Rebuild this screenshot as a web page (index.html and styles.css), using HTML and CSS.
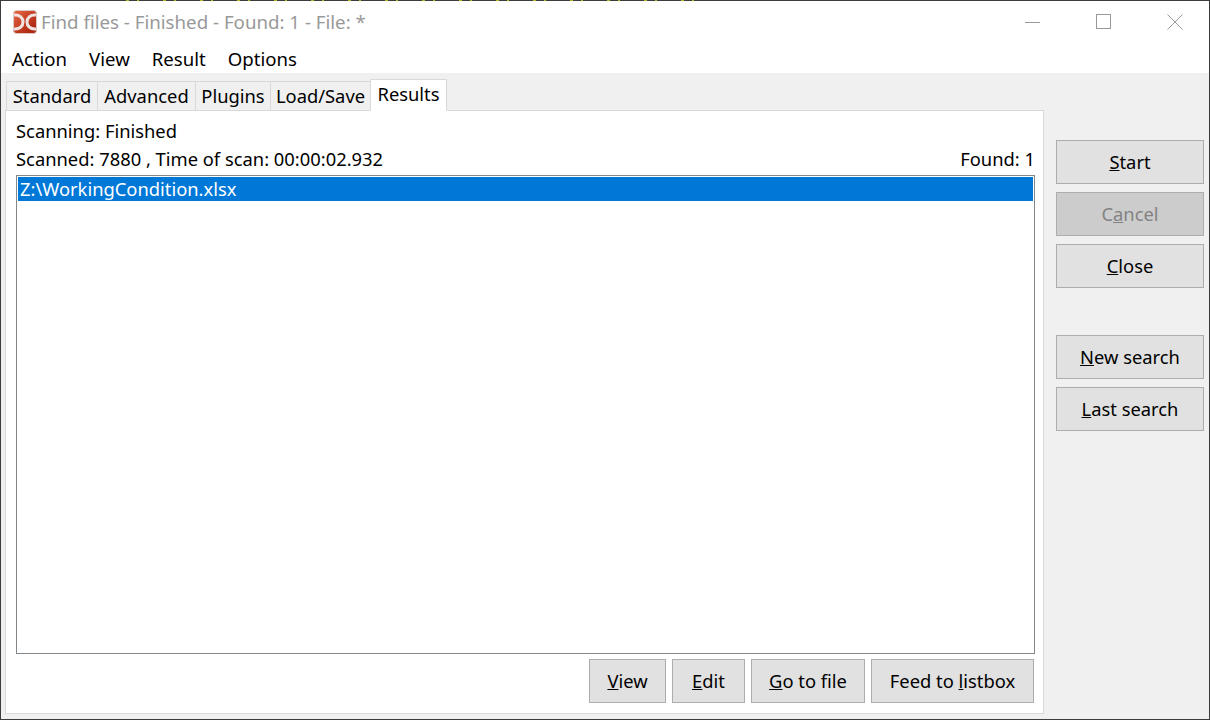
FILE: index.html
```html
<!DOCTYPE html>
<html lang="en">
<head>
<meta charset="utf-8">
<title>Find files</title>
<link rel="stylesheet" href="styles.css">
</head>
<body>
<div class="window">
  <header class="titlebar">
    <svg class="logo" width="24" height="24" viewBox="0 0 24 24">
      <defs><linearGradient id="lg" x1="0" y1="0" x2="1" y2="1"><stop offset="0" stop-color="#ea6a48"/><stop offset="0.55" stop-color="#c23a20"/><stop offset="1" stop-color="#a3200e"/></linearGradient></defs>
      <rect x="0.5" y="0.5" width="23" height="23" rx="3" fill="url(#lg)" stroke="#dcc8c4"/>
      <path d="M1 5 C7 4.5 10 8 10 12 C10 16 7 19.5 1 19" fill="none" stroke="#efe4e1" stroke-width="3"/>
      <path d="M23 5 C17 4.5 14 8 14 12 C14 16 17 19.5 23 19" fill="none" stroke="#efe4e1" stroke-width="3"/>
    </svg>
    <span class="title">Find files - Finished - Found: 1 - File: *</span>
    <div class="caption">
      <svg class="cap" width="16" height="16" viewBox="0 0 16 16"><path d="M0 8.5 H15" stroke="#999" fill="none"/></svg>
      <svg class="cap" width="16" height="16" viewBox="0 0 16 16"><rect x="0.5" y="0.5" width="14" height="14" stroke="#999" fill="none"/></svg>
      <svg class="cap" width="16" height="16" viewBox="0 0 16 16"><path d="M0.5 0.5 L15.5 15.5 M15.5 0.5 L0.5 15.5" stroke="#999" fill="none"/></svg>
    </div>
  </header>
  <nav class="menubar">
    <span>Action</span><span>View</span><span>Result</span><span>Options</span>
  </nav>
  <main class="client">
    <section class="left">
      <div class="tabs">
        <div class="tab t-standard">Standard</div>
        <div class="tab t-advanced">Advanced</div>
        <div class="tab t-plugins">Plugins</div>
        <div class="tab t-load">Load/Save</div>
        <div class="tab t-results active">Results</div>
      </div>
      <div class="panel">
        <div class="status">Scanning: Finished</div>
        <div class="status split"><span>Scanned: 7880 , Time of scan: 00:00:02.932</span><span>Found: 1</span></div>
        <div class="list"><div class="row">Z:\WorkingCondition.xlsx</div></div>
        <div class="actions">
          <button class="btn b-view"><u>V</u>iew</button>
          <button class="btn b-edit"><u>E</u>dit</button>
          <button class="btn b-go"><u>G</u>o to file</button>
          <button class="btn b-feed">Feed to <u>l</u>istbox</button>
        </div>
      </div>
    </section>
    <aside class="side">
      <div class="group">
        <button class="btn wide"><u>S</u>tart</button>
        <button class="btn wide off">C<u>a</u>ncel</button>
        <button class="btn wide"><u>C</u>lose</button>
      </div>
      <div class="group">
        <button class="btn wide"><u>N</u>ew search</button>
        <button class="btn wide"><u>L</u>ast search</button>
      </div>
    </aside>
  </main>
</div>
</body>
</html>
```
FILE: styles.css
```css
* { box-sizing: border-box; }
html, body { margin: 0; height: 100%; }
body { font-family: "Noto Sans", "Open Sans", sans-serif; font-size: 18.35px; color: #000; overflow: hidden; }
.window { position: relative; width: 1210px; height: 720px; display: flex; flex-direction: column; background: #f0f0f0; border: 1px solid #3c3c3c; }
.window::before { content: ""; position: absolute; top: -1px; left: 125px; width: 575px; height: 1px; background: repeating-linear-gradient(90deg, #b4b428 0 3px, #3c3c3c 3px 11px, #b4b428 11px 13px, #3c3c3c 13px 37px); }
.titlebar { height: 39px; flex: none; background: #fff; display: flex; align-items: center; padding: 2px 0 0 12px; }
.logo { flex: none; margin-right: 4px; }
.title { color: #999; font-size: 18.7px; line-height: 24px; }
.caption { margin-left: auto; display: flex; gap: 55px; padding-right: 26px; }
.menubar { height: 33px; flex: none; background: #fff; display: flex; gap: 22px; align-items: center; padding: 4px 0 0 11px; font-size: 18.6px; }
.client { flex: 1; display: flex; min-height: 0; }
.left { width: 1043px; flex: none; padding: 6px 0 5px 4px; display: flex; flex-direction: column; }
.tabs { height: 32px; flex: none; display: flex; align-items: flex-start; padding-left: 1px; position: relative; z-index: 1; margin-bottom: -1px; }
.tab { height: 30px; margin-top: 2px; text-align: center; line-height: 28px; background: #f0f0f0; border: 1px solid #d9d9d9; margin-right: -1px; flex: none; }
.tab.active { height: 32px; margin-top: 0; background: #fff; border-bottom-color: #fff; }
.t-standard { width: 92px; }
.t-advanced { width: 99px; }
.t-plugins { width: 76px; }
.t-load { width: 101px; }
.t-results { width: 77px; }
.panel { flex: 1; background: #fff; border: 1px solid #d9d9d9; padding: 6px 8px 10px 10px; display: flex; flex-direction: column; min-height: 0; }
.status { height: 28px; line-height: 28px; flex: none; }
.split { display: flex; justify-content: space-between; }
.list { flex: 1; border: 1px solid #82878c; padding: 1px; background: #fff; margin-top: 2px; min-height: 0; }
.row { height: 24px; line-height: 23px; background: #0078d7; color: #fff; padding-left: 2px; }
.actions { flex: none; display: flex; justify-content: flex-end; gap: 6px; margin-top: 5px; padding-right: 1px; }
.btn { height: 44px; font: inherit; color: #000; background: #e1e1e1; border: 1px solid #adadad; padding: 0 0 2px; }
.b-view { width: 77px; }
.b-edit { width: 73px; }
.b-go { width: 114px; }
.b-feed { width: 163px; }
.side { flex: 1; display: flex; flex-direction: column; gap: 47px; padding: 67px 5px 0 12px; }
.group { display: flex; flex-direction: column; gap: 8px; }
.wide { width: 148px; }
.off { background: #cccccc; color: #838383; }
```
